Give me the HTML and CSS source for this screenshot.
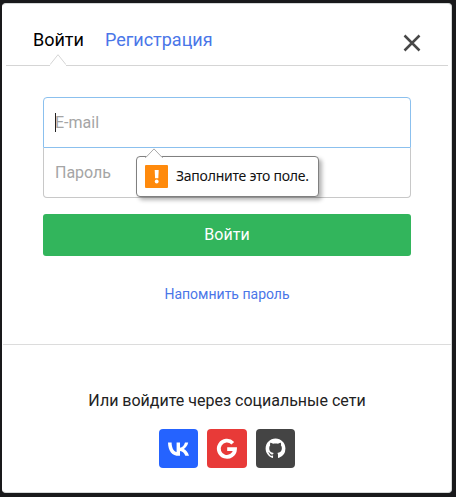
FILE: index.html
```html
<!DOCTYPE html>
<html lang="ru">
<head>
<meta charset="utf-8">
<title>Войти</title>
<link rel="stylesheet" href="styles.css">
</head>
<body>
<main class="modal">
  <header class="header">
    <nav class="tabs">
      <a class="tab tab-active">Войти<svg class="notch" width="16" height="12" viewBox="0 0 16 12"><path d="M0 12V11L8 .7L16 11V12Z" fill="#fff"/><path d="M0 10.7L8 .7L16 10.7" fill="none" stroke="#d5d5d5"/></svg></a>
      <a class="tab">Регистрация</a>
    </nav>
    <svg class="close" width="18" height="18" viewBox="0 0 18 18"><path d="M1.5 1.5L16.5 16.5M16.5 1.5L1.5 16.5" stroke="#484848" stroke-width="2.5"/></svg>
  </header>
  <form class="form">
    <div class="fields">
      <div class="field field-focus"><span class="caret"></span>E-mail</div>
      <div class="field field-last">Пароль</div>
      <div class="tooltip">
        <svg class="pointer" width="18" height="10" viewBox="0 0 18 10"><path d="M1 10V9L9 .8L17 9V10Z" fill="#fff"/><path d="M0 9.3H1L9 .9L17 9.3H18" fill="none" stroke="#aaa"/></svg>
        <svg class="warning" width="23" height="23" viewBox="0 0 23 23"><rect width="23" height="23" rx="1" fill="#ff8a0c"/><path d="M9.7 5H13.7L13.3 13.2H10.1Z" fill="#fff"/><circle cx="11.7" cy="16.5" r="1.9" fill="#fff"/></svg>
        <span class="message">Заполните это поле.</span>
      </div>
    </div>
    <div class="submit">Войти</div>
    <a class="remind">Напомнить пароль</a>
  </form>
  <footer class="footer">
    <div class="social-title">Или войдите через социальные сети</div>
    <div class="socials">
      <a class="social vk"><svg width="39" height="39" viewBox="0 0 39 39"><path fill="#fff" d="M19.9 26.8C13.1 26.8 9.2 22.1 9 13.4H12.6C12.7 19.7 15.3 22.4 17.6 23V13.4H21V18.8C23.2 18.6 25.3 16.2 26 13.4H29.2C28.7 16.4 26.4 18.9 24.8 19.9C26.4 20.7 29.1 22.9 30 26.8H26.3C25.5 24.3 23.6 22.4 21 22.1V26.8Z"/></svg></a>
      <a class="social google"><svg width="40" height="39" viewBox="0 0 40 39"><path d="M25.8 14.2A8.1 8.1 0 1 0 28 20.1H20.2" fill="none" stroke="#fff" stroke-width="3.8"/></svg></a>
      <a class="social github"><svg width="39" height="39" viewBox="0 0 39 39"><path transform="translate(9.6 9.6) scale(1.24)" fill="#fff" d="M8 0C3.58 0 0 3.58 0 8c0 3.54 2.29 6.53 5.47 7.59.4.07.55-.17.55-.38 0-.19-.01-.82-.01-1.49-2.01.37-2.53-.49-2.69-.94-.09-.23-.48-.94-.82-1.13-.28-.15-.68-.52-.01-.53.63-.01 1.08.58 1.23.82.72 1.21 1.87.87 2.33.66.07-.52.28-.87.51-1.07-1.78-.2-3.64-.89-3.64-3.95 0-.87.31-1.59.82-2.15-.08-.2-.36-1.02.08-2.12 0 0 .67-.21 2.2.82.64-.18 1.32-.27 2-.27s1.36.09 2 .27c1.53-1.04 2.2-.82 2.2-.82.44 1.1.16 1.92.08 2.12.51.56.82 1.27.82 2.15 0 3.07-1.87 3.75-3.65 3.95.29.25.54.73.54 1.48 0 1.07-.01 1.93-.01 2.2 0 .21.15.46.55.38A8.01 8.01 0 0 0 16 8c0-4.42-3.58-8-8-8z"/></svg></a>
    </div>
  </footer>
</main>
</body>
</html>
```
FILE: styles.css
```css
* { box-sizing: border-box; }
body {
  margin: 0;
  height: 497px;
  padding: 3px 4px 4px 2px;
  background: #19191b;
  font-family: Roboto, sans-serif;
  color: #222;
  overflow: hidden;
}
svg { display: block; }
.modal {
  height: 490px;
  background: #fff;
  border: 1px solid #d5d8d8;
  border-left-color: #fff;
  border-radius: 4px;
}
.header {
  display: flex;
  justify-content: space-between;
  height: 62px;
  margin: 0 3px;
  padding: 0 27px;
  border-bottom: 1px solid #d5d5d5;
}
.tabs { display: flex; gap: 21px; }
.tab {
  position: relative;
  height: 61px;
  padding-top: 25px;
  font-size: 18px;
  line-height: 22px;
  color: #4a76e8;
}
.tab-active { color: #000; }
.notch { position: absolute; left: 17px; bottom: -1px; }
.close { margin: 30px 0 0; }
.form {
  height: 279px;
  padding: 31px 40px 0;
  border-bottom: 1px solid #dcdcdc;
}
.fields { position: relative; width: 368px; }
.field {
  height: 51px;
  padding: 0 11px;
  border: 1px solid #8bc0ee;
  border-radius: 4px 4px 0 0;
  font-size: 16px;
  line-height: 49px;
  color: #a5a5a5;
}
.field-focus { position: relative; }
.caret {
  position: absolute;
  left: 11px;
  top: 15px;
  width: 1px;
  height: 19px;
  background: #222;
}
.field-last {
  height: 50px;
  border-color: #c8c8c8;
  border-top: 0;
  border-radius: 0 0 4px 4px;
}
.tooltip {
  position: absolute;
  left: 93px;
  top: 59px;
  display: flex;
  align-items: center;
  gap: 8px;
  width: 183px;
  height: 41px;
  padding-left: 8px;
  border: 1px solid #808080;
  border-radius: 4px;
  background: #fff;
  box-shadow: 3px 3px 4px rgba(0, 0, 0, .3);
  font-family: "Noto Sans", sans-serif;
  font-size: 14px;
  letter-spacing: -.25px;
  color: #111;
  white-space: nowrap;
}
.message { padding-bottom: 2px; }
.pointer { position: absolute; left: 8px; top: -9px; }
.submit {
  width: 368px;
  height: 42px;
  margin-top: 16px;
  border-radius: 3px;
  background: #32b55c;
  color: #fff;
  font-size: 16px;
  line-height: 41px;
  text-align: center;
}
.remind {
  display: block;
  width: 368px;
  margin-top: 28px;
  font-size: 14px;
  line-height: 20px;
  text-align: center;
  color: #4a76e8;
}
.footer { padding-top: 46px; }
.social-title {
  font-size: 16px;
  line-height: 20px;
  text-align: center;
}
.socials {
  display: flex;
  justify-content: center;
  gap: 9px;
  margin-top: 18px;
}
.social { height: 39px; border-radius: 4px; }
.vk { background: #2563ff; }
.google { background: #e83a38; }
.github { background: #444; }
```
